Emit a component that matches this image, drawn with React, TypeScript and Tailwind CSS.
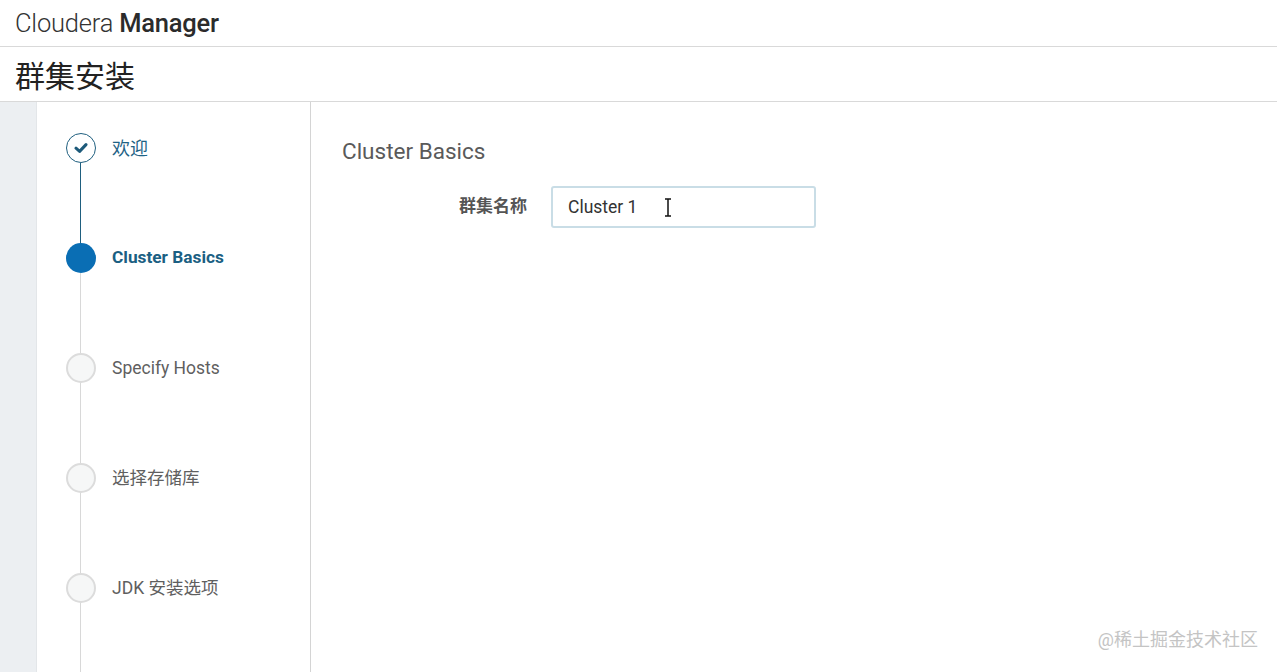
import React from 'react';

type Step = { label: string; state: 'done' | 'active' | 'todo' };

const steps: Step[] = [
  { label: '欢迎', state: 'done' },
  { label: 'Cluster Basics', state: 'active' },
  { label: 'Specify Hosts', state: 'todo' },
  { label: '选择存储库', state: 'todo' },
  { label: 'JDK 安装选项', state: 'todo' },
];

const font = { fontFamily: 'Roboto, "Noto Sans CJK SC", sans-serif' };

function StepDot({ state }: { state: Step['state'] }) {
  if (state === 'done') {
    return (
      <div className="flex h-[30px] w-[30px] items-center justify-center rounded-full border border-[#1f5f7f] bg-white">
        <svg width="14" height="12" viewBox="0 0 14 12">
          <path d="M2 6.2 L5.6 9.4 L12 2.6" fill="none" stroke="#1d5a7a" strokeWidth="3" strokeLinecap="round" strokeLinejoin="round" />
        </svg>
      </div>
    );
  }
  if (state === 'active') {
    return <div className="h-[30px] w-[30px] rounded-full bg-[#0a6eb4]" />;
  }
  return <div className="h-[30px] w-[30px] rounded-full border-2 border-[#dcdcdc] bg-[#f6f7f7]" />;
}

export default function App() {
  return (
    <div className="relative flex h-[672px] w-[1277px] flex-col overflow-hidden bg-white" style={font}>
      <header className="flex h-[47px] items-center border-b border-[#d9d9d9] pl-[15px]">
        <span className="text-[25.5px] font-light tracking-[-0.2px] text-[#333]">
          Cloudera <b className="font-medium text-[#2b2b2b]">Manager</b>
        </span>
      </header>
      <div className="flex h-[55px] items-center border-b border-[#d9d9d9] pl-[15px] pt-[5px]">
        <h1 className="text-[30px] font-normal text-[#222]">群集安装</h1>
      </div>
      <div className="flex flex-1">
        <div className="w-[36px] bg-[#eceff2]" />
        <aside className="relative w-[275px] border-l border-[#e3e6e9] border-r border-r-[#d4d4d4]">
          <div className="absolute left-[43px] top-[61px] h-[98px] w-px bg-[#1f5f7f]" />
          <div className="absolute left-[43px] top-[171px] bottom-0 w-px bg-[#d8d8d8]" />
          <ul className="relative flex flex-col gap-[80px] pl-[29px] pt-[31px]">
            {steps.map((s) => (
              <li key={s.label} className="flex h-[30px] items-center gap-[16px]">
                <StepDot state={s.state} />
                <span
                  className={
                    s.state === 'active'
                      ? 'text-[17.3px] font-bold text-[#1b5f83]'
                      : s.state === 'done'
                        ? 'text-[18px] text-[#1e6386]'
                        : 'text-[17.5px] text-[#5f5f5f]'
                  }
                >
                  {s.label}
                </span>
              </li>
            ))}
          </ul>
        </aside>
        <main className="flex-1 pl-[31px] pt-[33px]">
          <h2 className="text-[22.5px] font-normal text-[#5a5a5a]">Cluster Basics</h2>
          <div className="mt-[17px] flex items-center">
            <label className="w-[209px] pr-[24px] text-right text-[17px] font-bold text-[#555]">群集名称</label>
            <div className="relative flex h-[42px] w-[265px] items-center rounded-[3px] border-2 border-[#c9dde6] bg-white pl-[15px] text-[17.5px] text-[#333]">
              Cluster 1
              <svg className="absolute left-[111px] top-[10px]" width="8" height="19" viewBox="0 0 8 19">
                <path d="M1 1 H7 M4 1 V18 M1 18 H7" stroke="#111" strokeWidth="1.5" fill="none" />
              </svg>
            </div>
          </div>
        </main>
      </div>
      <div className="absolute bottom-[19px] right-[19px] text-[18px] text-[#c4c4c4]">@稀土掘金技术社区</div>
    </div>
  );
}
